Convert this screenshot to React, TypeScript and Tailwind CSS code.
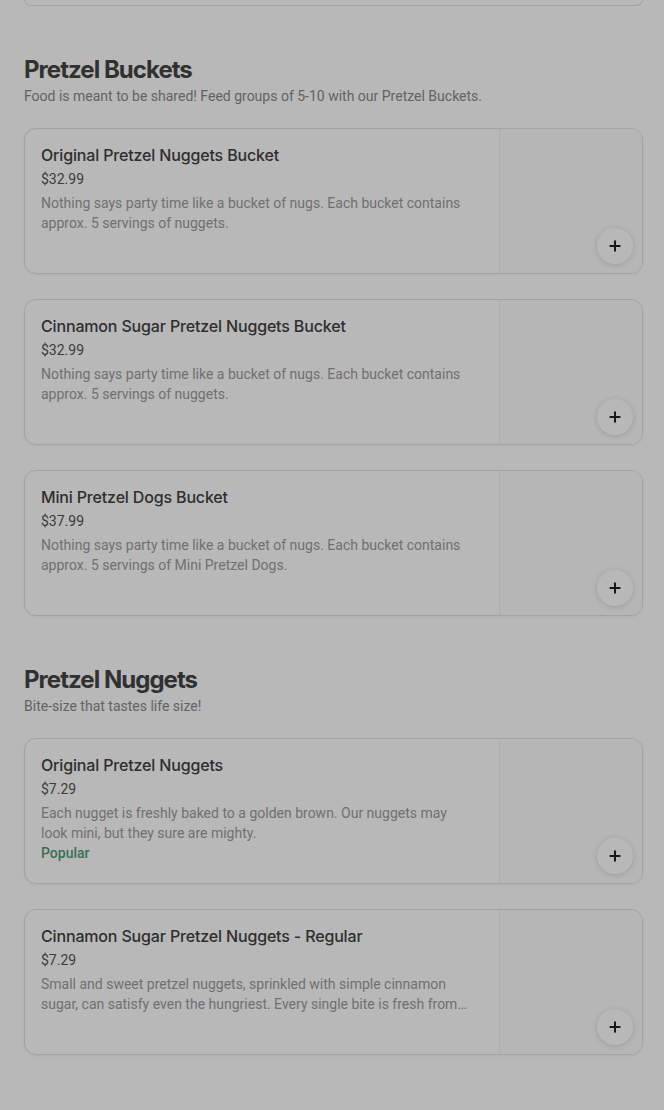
import { Plus } from "lucide-react";

type Item = { name: string; price: string; desc: string; popular?: boolean };

const sections: { title: string; subtitle: string; items: Item[] }[] = [
  {
    title: "Pretzel Buckets",
    subtitle: "Food is meant to be shared! Feed groups of 5-10 with our Pretzel Buckets.",
    items: [
      {
        name: "Original Pretzel Nuggets Bucket",
        price: "$32.99",
        desc: "Nothing says party time like a bucket of nugs. Each bucket contains approx. 5 servings of nuggets.",
      },
      {
        name: "Cinnamon Sugar Pretzel Nuggets Bucket",
        price: "$32.99",
        desc: "Nothing says party time like a bucket of nugs. Each bucket contains approx. 5 servings of nuggets.",
      },
      {
        name: "Mini Pretzel Dogs Bucket",
        price: "$37.99",
        desc: "Nothing says party time like a bucket of nugs. Each bucket contains approx. 5 servings of Mini Pretzel Dogs.",
      },
    ],
  },
  {
    title: "Pretzel Nuggets",
    subtitle: "Bite-size that tastes life size!",
    items: [
      {
        name: "Original Pretzel Nuggets",
        price: "$7.29",
        desc: "Each nugget is freshly baked to a golden brown. Our nuggets may look mini, but they sure are mighty.",
        popular: true,
      },
      {
        name: "Cinnamon Sugar Pretzel Nuggets - Regular",
        price: "$7.29",
        desc: "Small and sweet pretzel nuggets, sprinkled with simple cinnamon sugar, can satisfy even the hungriest. Every single bite is fresh from the oven.",
      },
    ],
  },
];

const body = { fontFamily: "Roboto, 'Noto Sans', sans-serif" };

function ItemCard({ item }: { item: Item }) {
  return (
    <div className="flex h-[146px] overflow-hidden rounded-xl border border-[#e2e2e2] bg-white shadow-[0_1px_3px_rgba(0,0,0,0.05)]">
      <div className="min-w-0 flex-1 pt-4 pr-6 pl-4">
        <h3 className="text-[16px] leading-5 font-medium tracking-[-0.01em] text-[#424242]">{item.name}</h3>
        <p className="mt-1 text-[14px] leading-5 text-[#555]" style={body}>{item.price}</p>
        <p className="mt-1 line-clamp-2 text-[14px] leading-5 text-[#9c9c9c]" style={body}>{item.desc}</p>
        {item.popular && (
          <p className="text-[14px] leading-5 font-medium text-[#4f9a75]" style={body}>Popular</p>
        )}
      </div>
      <div className="relative w-[143px] shrink-0 border-l border-[#f0f0f0] bg-[#fcfcfc]">
        <button className="absolute right-[9px] bottom-[9px] flex h-9 w-9 items-center justify-center rounded-full bg-white shadow-[0_1px_6px_rgba(0,0,0,0.14)]">
          <Plus className="h-4 w-4 text-[#222]" strokeWidth={3} />
        </button>
      </div>
    </div>
  );
}

export default function App() {
  return (
    <div className="relative min-h-[1110px] overflow-hidden bg-white" style={{ fontFamily: "Inter, 'Noto Sans', sans-serif" }}>
      <div className="pr-[21px] pl-6">
        {/* bottom edge of the previous card, scrolled out of view */}
        <div className="-mt-px h-[7px] rounded-b-xl border border-t-0 border-[#e2e2e2] bg-white" />

        {sections.map((s) => (
          <section key={s.title} className="mt-12">
            <h2 className="text-[24px] leading-8 font-bold tracking-[-0.04em] text-[#444]">{s.title}</h2>
            <p className="text-[14px] leading-5 text-[#8a8a8a]" style={body}>{s.subtitle}</p>
            <div className="mt-[22px] flex flex-col gap-[25px]">
              {s.items.map((it) => (
                <ItemCard key={it.name} item={it} />
              ))}
            </div>
          </section>
        ))}
      </div>

      {/* modal backdrop */}
      <div className="fixed inset-0 bg-black/[0.28]" />
    </div>
  );
}
